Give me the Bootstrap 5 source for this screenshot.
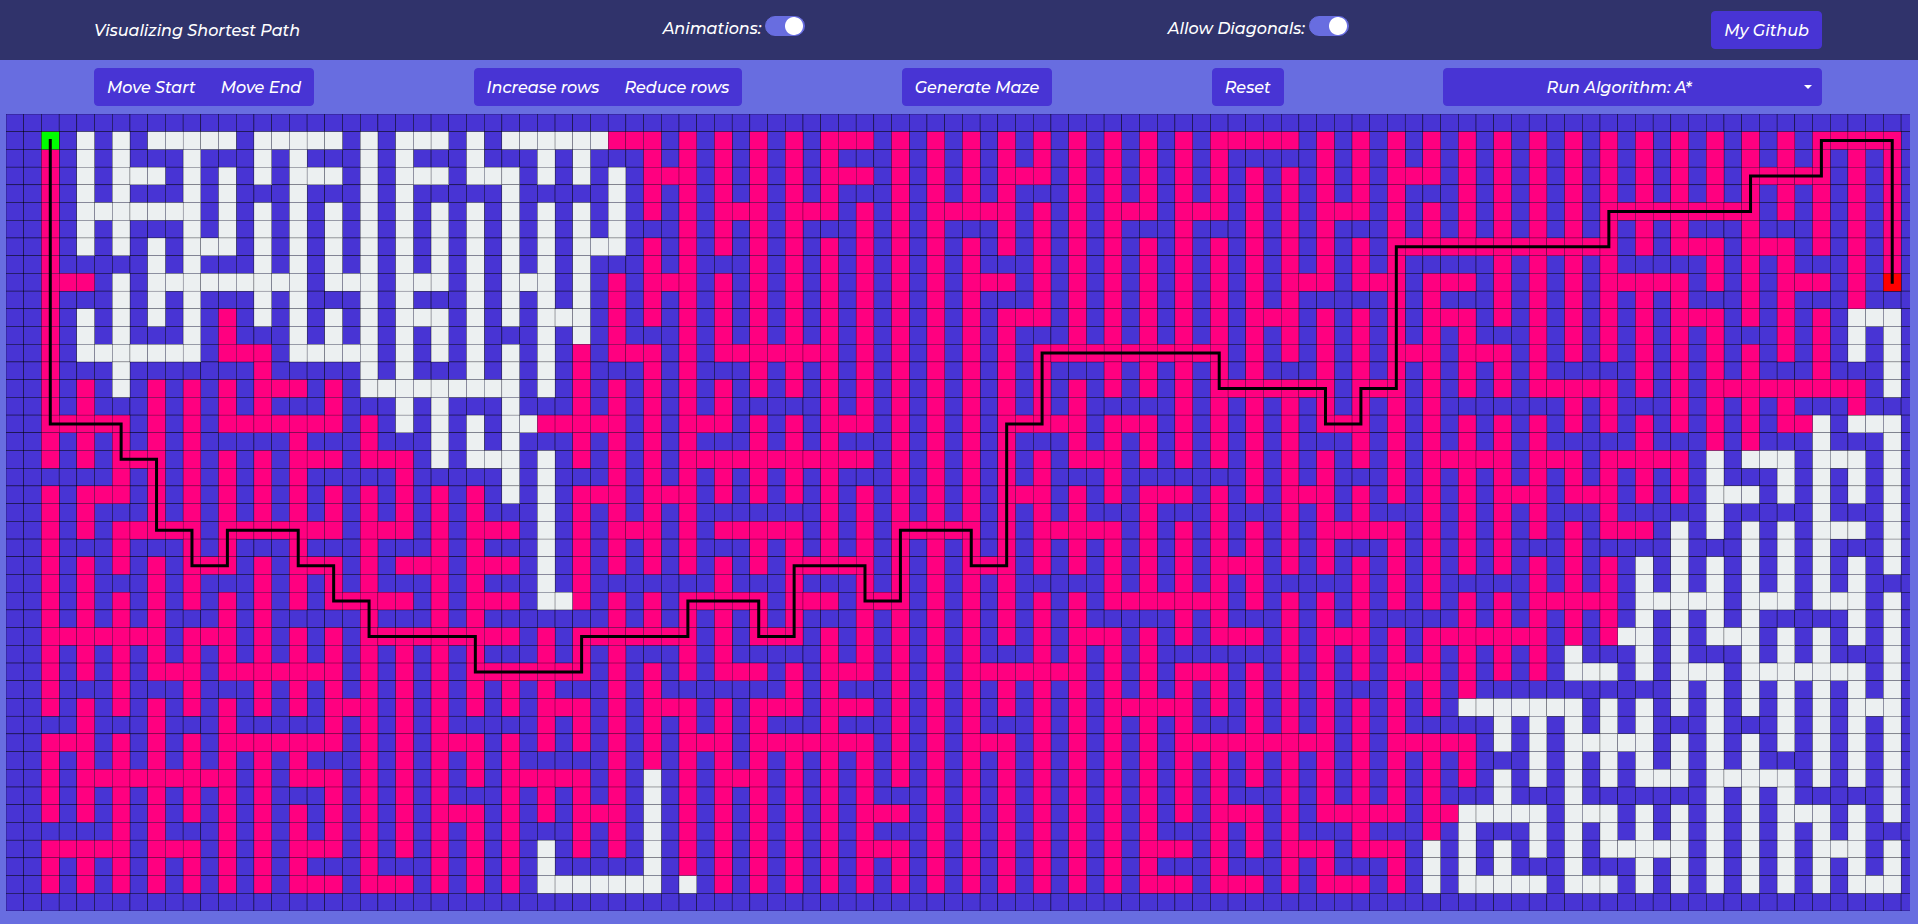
<!DOCTYPE html>
<html lang="en">
<head>
<meta charset="utf-8">
<meta name="viewport" content="width=device-width, initial-scale=1">
<title>Visualizing Shortest Path</title>
<link href="https://cdn.jsdelivr.net/npm/bootstrap@5.3.0/dist/css/bootstrap.min.css" rel="stylesheet">
<style>
  body {
    background: #686de0;
    color: #fff;
    font: italic 500 16px/24px Montserrat, Inter, sans-serif;
  }
  .side-pad { padding-left: 94px; padding-right: 96px; }
  .top-nav { background: #30336b; min-height: 60px; }
  .site-name { padding-top: 2px; }
  .switch-item { padding-bottom: 2px; }
  .tool-bar { min-height: 54px; }
  .btn-app {
    --bs-btn-color: #fff;
    --bs-btn-bg: #4834d4;
    --bs-btn-border-color: #4834d4;
    --bs-btn-hover-color: #fff;
    --bs-btn-hover-bg: #3b29b8;
    --bs-btn-hover-border-color: #3b29b8;
    --bs-btn-active-color: #fff;
    --bs-btn-active-bg: #3b29b8;
    --bs-btn-active-border-color: #3b29b8;
    --bs-btn-font-size: 16px;
    --bs-btn-font-weight: 500;
    --bs-btn-line-height: 24px;
    --bs-btn-border-radius: 4px;
    padding-top: 7px;
    padding-bottom: 5px;
    font-style: italic;
  }
  .run-group { width: 379px; }
  .form-check-input.toggle {
    width: 40px;
    height: 20px;
    margin: 0 0 6px;
    border: 1px solid #686de0;
    border-radius: 10px;
    background: radial-gradient(circle at 28px 9px, #fff 8.5px, #686de0 9.5px);
  }
  .form-check-input.toggle:not(:checked) {
    background: radial-gradient(circle at 10px 9px, #fff 8.5px, #686de0 9.5px);
  }
  .board-area { margin: 0 8px 13px 6px; min-height: 200px; }
</style>
</head>
<body class="d-flex flex-column vh-100 overflow-hidden">
  <nav class="top-nav side-pad d-flex align-items-center justify-content-between">
    <a class="site-name text-white text-decoration-none" href="#">Visualizing Shortest Path</a>
    <div class="switch-item d-flex align-items-center gap-1">
      <label for="animations">Animations:</label>
      <input class="form-check-input toggle" type="checkbox" role="switch" id="animations" checked>
    </div>
    <div class="switch-item d-flex align-items-center gap-1">
      <label for="diagonals">Allow Diagonals:</label>
      <input class="form-check-input toggle" type="checkbox" role="switch" id="diagonals" checked>
    </div>
    <a class="btn btn-app" href="#">My Github</a>
  </nav>

  <div class="tool-bar side-pad d-flex align-items-center justify-content-between">
    <div class="btn-group">
      <button type="button" class="btn btn-app">Move Start</button>
      <button type="button" class="btn btn-app">Move End</button>
    </div>
    <div class="btn-group">
      <button type="button" class="btn btn-app">Increase rows</button>
      <button type="button" class="btn btn-app">Reduce rows</button>
    </div>
    <button type="button" class="btn btn-app">Generate Maze</button>
    <button type="button" class="btn btn-app">Reset</button>
    <div class="btn-group run-group">
      <button type="button" class="btn btn-app flex-grow-1">Run Algorithm: A*</button>
      <button type="button" class="btn btn-app dropdown-toggle dropdown-toggle-split flex-grow-0" data-bs-toggle="dropdown" aria-expanded="false" aria-label="Choose algorithm"></button>
      <ul class="dropdown-menu dropdown-menu-end">
        <li><a class="dropdown-item" href="#">A*</a></li>
        <li><a class="dropdown-item" href="#">Dijkstra</a></li>
      </ul>
    </div>
  </div>

  <main class="board-area flex-grow-1 overflow-hidden" id="boardArea">
    <canvas id="board" class="d-block" role="img" aria-label="Maze with the shortest path from start to end"></canvas>
  </main>

<script src="https://cdn.jsdelivr.net/npm/bootstrap@5.3.0/dist/js/bootstrap.bundle.min.js"></script>
<script>
// The maze between its top and bottom border rows. x = searched, o = open, . = wall.
// Lines alternate: a corridor row lists every column; the row between two
// corridors lists even columns only, since its odd columns are always wall.
const MAZE = `
..x.o.o.ooooo.ooooo.o. ooo.o.ooooooxxx.x.x.x. x.xxx.x.x.x.x.x.x.x.x. x.xxxxx.x.x.x.x.x.x.x. x.x.x.x.x.x.x.xxxxx.
.xoo.o.oo.o o.o.oo.xxxx xx.xxxxxxxx xx..xxxxxxx xxxxxxxxxx
..x.o.ooo.o.o.o.ooo.o. ooo.ooo.o.o.o.xxx.x.x. x.xxx.x.x.x.xxx.x.x.x. x.x.x.x.x.x.xxx.x.x.x. x.x.x.x.x.xxxxx.x.x.
.xoo.oo.o.o o..o..oxxxx xx.xxxx.xxx xxxxxxx.xxx xxxxxxxxxx
..x.ooooooo.o.o.o.o.o. o.o.o.o.o.o.o.x.x.xxx. xxx.x.x.xxxxx.x.x.xxx. xxx.x.x.xxx.x.x.x.x.x. x.xxxxxxxxx.x.x.x.x.
.xoo.oooooo ooooooo.xxx x.xxx.xxxx. x.xxx.xxxxx xxxx.x.xxx
..x.o.o.o.ooo.o.o.o.o. o.o.o.o.o.ooo.x.x.x.x. x.x.x.x.x.x.x.x.x.x.x. x.x.x.x.x.x.xxxxxxxxxx xxx.x.xxx.xxx.x.x.x.
.x..oo.oooo oooooo.xx.x xxxxxx.xxxx xxxxxxx..xx xx..xxx.xx
..xxx.o.ooooooooo.ooo. ooo.o.ooo.o.x.xxx.x.x. x.x.x.x.x.xxx.x.x.x.x. x.x.x.xxx.xxx.xxx.x.x. x.xxxxx.x.x.xxx.x.x.
.x.ooo.oo.o o.ooooxxxxx xxxxxx.xxxx xxxx..xx.xx xxxx.xx.x.
..x.o.o.o.o.x.o.o.o.o. ooo.o.o.ooo.x.x.x.x.x. x.x.x.x.x.x.xxx.x.x.x. x.x.xxx.x.x.x.xxx.x.x. x.x.x.xxx.x.x.x.ooo.
.xoo.ox.ooo ooo.oox.xxx xxxxxxx.xxx xxxxxxxxx.x xxxxx.xxoo
..x.ooooooo.xxx.ooooo. o.o.o.o.o.x.xxx.x.xxxx xxx.x.x.x.x.x.xxxxxxxx xxx.x.x.x.x.xxx.xxx.x. x.x.x.x.x.x.x.x.o.o.
.x.o...x..o o.ooox.xx.x xxxxxxxx.xx xxx.xxxxxxx ..xxxx.x.o
..x.x.o.x.x.x.xxx.x.oo ooooooo.o.x.x.x.x.x.x. x.x.x.x.x.x.x.x.x.x.x. x.xxxxxxx.xxx.x.x.x.xx xxx.x.x.xxxxxxxxx.o.
.xx.xxxx.x. oo.o.xxxxx. .xxxxxxxx.. xxxxxxxx... xx.xxxx.x.
..xxxxx.x.x.xxxxxxx.x. o.o.o.ooxxxxx.x.xxx.x. x.xxx.x.x.x.xxxxx.xxx. x.x.x.x.xxx.x.x.x.x.x. x.x.x.x.x.x.xxo.ooo.
.xxxxx..x.x .ooo.xxxx.x xx.xxxx.xxx xxxx.xxxxxx ..x.xx.o.o
..x.x.xxx.x.x.x.xxx.xx x.o.ooo.o.x.x.x.xxxxxx xxxxx.x.x.x.x.x.xxx.x. x.x.x.x.x.x.x.xxxxx.xx x.xxxxx.o.ooo.ooo.o.
...xxxxxx.. x..oo.xxxxx xx.xxxxx.x. ..xxx.xxxxx xxxxo.oooo
..x.xxx.x.x.x.x.x.x.x. x.x.x.o.o.xxx.xxx.x.x. x.x.x.x.x.x.xxx.x.x.xx x.x.x.xxx.x.x.x.x.xxx. xxx.x.x.ooo.o.o.o.o.
.xx.xxxxxxx xxx.oxxxx.. .xxxxxxxx.x .x.xxx.xxxx .x..o..o.o
..x.x.xxxxx.xxxxxxx.xx x.x.xxx.o.x.xxx.x.xxxx x.x.x.xxxxx.x.xxxxx.x. x.x.x.x.xxxxx.x.x.x.x. x.xxx.o.o.o.o.ooo.o.
.x.x.xx.x.x .xx.oxxxx.x xxxxxxxxxxx xxxxx.xxxx. x..o.ooo.o
..x.x.x.x.xxx.x.xxx.x. xxx.xxx.o.x.x.x.x.x.x. xxxxx.x.x.xxx.x.x.x.x. x.xxx.x.x.x.x.x.x.x.x. x.x.o.o.o.o.o.o.o.o.
.xx.xx.xxxx .xx.ox...x. x.xxxxx..xx xxx..xxx..x xxooooooo.
..x.x.x.x.x.x.x.x.xxxx x.x.xxx.oox.x.x.xxxxx. xxx.xxx.x.x.x.x.x.xxxx xxx.x.x.x.x.x.x.x.x.xx xxx.ooooo.ooo.ooo.o.
.xxxx.xx..x .xx...xxxxx x.xxxxxxx.. xx.xxx..xxx xxoooo..oo
..xxxxxxx.xxx.x.x.x.xx xxxxxxx.x.xxxxxxx.x.xx x.x.x.x.x.x.x.x.xxx.x. x.xxx.x.xxx.x.xxxxxxx. x.xoo.o.ooo.o.o.o.o.
.xxxxxxxxxx xxx.xxx.xx. .xxxxx.xxxx ...xxxxxxxx o.oo.ooo.o
..x.x.x.xxx.xxxxxxx.x. x.x.xxxxxxx.x.x.x.xxx. x.xxx.x.x.xxxxxxx.x.x. xxx.x.x.x.x.xxx.x.x.x. ooo.o.ooo.ooooooo.o.
.x.x.x.xxxx xxxxx.xx... xx.xxxxxxxx xxxxx.xxx.. ...ooooooo
..x.x.x.x.x.x.x.x.xxx. x.x.x.x.xxx.x.xxx.x.xx x.xxx.x.x.x.x.x.x.xxxx x.x.x.x.x.x.x.x.oooooo o.o.o.o.o.o.o.o.ooo.
..x.x.x..xx xx..xxxxxxx .x.xxx.xxxx x.xxxxx..oo ooo.o.oooo
..xxx.x.x.x.xxxxxxx.x. x.xxx.x.x.x.x.x.xxx.xx xxxxx.x.x.xxx.x.x.x.x. xxxxxxxxx.x.xxxxx.o.o. ooooo.o.o.o.o.o.o.o.
.xxxxxxxx.x xxxx..xxxxx xxxxxxxxxxx xxxxxxxxx.o oooooo.ooo
..x.xxxxxxxxx.x.xxx.x. x.x.x.xxxxx.x.o.x.xxx. x.x.x.x.x.x.x.x.x.x.x. x.x.x.x.x.x.x.x.x.o.o. o.o.ooo.ooooo.o.o.o.
.xxxxxxx.xx xx.xxxxoxxx xxx.xxxxxxx xx.xxxxx.o. o...ooo..o
..x.x.x.x.x.x.x.x.x.x. x.xxx.x.x.xxx.o.x.x.x. x.x.xxx.x.x.x.x.x.x.x. x.xxx.x.xxxxx.xxooooo. ooo.o.o.o.o.ooo.o.o.
...xx.xxxxx xxxx.xxoxxx xxx.xxxxxxx .xxx.x.xo.o ooooooooo.
..xxxxx.xxx.x.x.xxx.x. x.x.x.x.o.x.x.o.x.x.x. x.x.xxx.x.x.x.x.x.x.xx x.x.x.xxx.xxx.o.o.o.o. o.ooooo.o.o.o.ooo.o.
.xxxxxxxx.x .xxxo..oxxx xxxxxxxxxxx .x.xx.xooo. o.oooooooo
..x.x.x.x.x.x.x.xxx.xx x.x.x.x.ooooooo.o.x.x. x.x.x.x.x.x.x.x.x.x.xx x.xxx.x.xxx.x.o.ooooo. ooo.o.o.o.o.o.o.ooo.
`;

const COLS = 108;
const grid = MAZE.trim().split('\n').map((line, i) => {
  const cells = line.replaceAll(' ', '');
  return i % 2 ? [...cells].join('.') + '.' : cells;
});
grid.unshift('.'.repeat(COLS));
grid.push('.'.repeat(COLS));
const ROWS = grid.length;

const START = [2, 1];
const END = [106, 9];

// Corner points of the shortest path, as column,row.
const PATH = `2,1 2,17 6,17 6,19 8,19 8,23 10,23 10,25 12,25 12,23 16,23 16,25 18,25 18,27 20,27 20,29
26,29 26,31 32,31 32,29 38,29 38,27 42,27 42,29 44,29 44,25 48,25 48,27 50,27 50,23 54,23 54,25
56,25 56,17 58,17 58,13 68,13 68,15 74,15 74,17 76,17 76,15 78,15 78,7 90,7 90,5 98,5 98,3
102,3 102,1 106,1 106,9`.split(/\s+/).map(p => p.split(',').map(Number));

const FILL = { '.': '#4834d4', o: '#ecf0f1', x: '#ff0080', start: '#00ff00', end: '#ff0000' };
const area = document.getElementById('boardArea');
const board = document.getElementById('board');

function draw() {
  board.width = area.clientWidth;
  board.height = area.clientHeight;
  const size = board.height / ROWS;
  const ctx = board.getContext('2d');

  const paint = (col, row, kind) => {
    ctx.fillStyle = FILL[kind];
    ctx.lineWidth = kind === '.' ? 0.4 : 0.25;
    ctx.fillRect(col * size, row * size, size, size);
    ctx.strokeRect(col * size, row * size, size, size);
  };
  ctx.strokeStyle = '#000';
  for (const kind of ['.', 'o', 'x']) {
    grid.forEach((line, row) => [...line].forEach((cell, col) => {
      if (cell === kind) paint(col, row, kind);
    }));
  }
  paint(...START, 'start');
  paint(...END, 'end');

  ctx.lineWidth = 3;
  ctx.lineCap = 'square';
  ctx.beginPath();
  PATH.forEach(([col, row]) => ctx.lineTo((col + 0.5) * size, (row + 0.5) * size));
  ctx.stroke();
}

new ResizeObserver(draw).observe(area);
</script>
</body>
</html>
